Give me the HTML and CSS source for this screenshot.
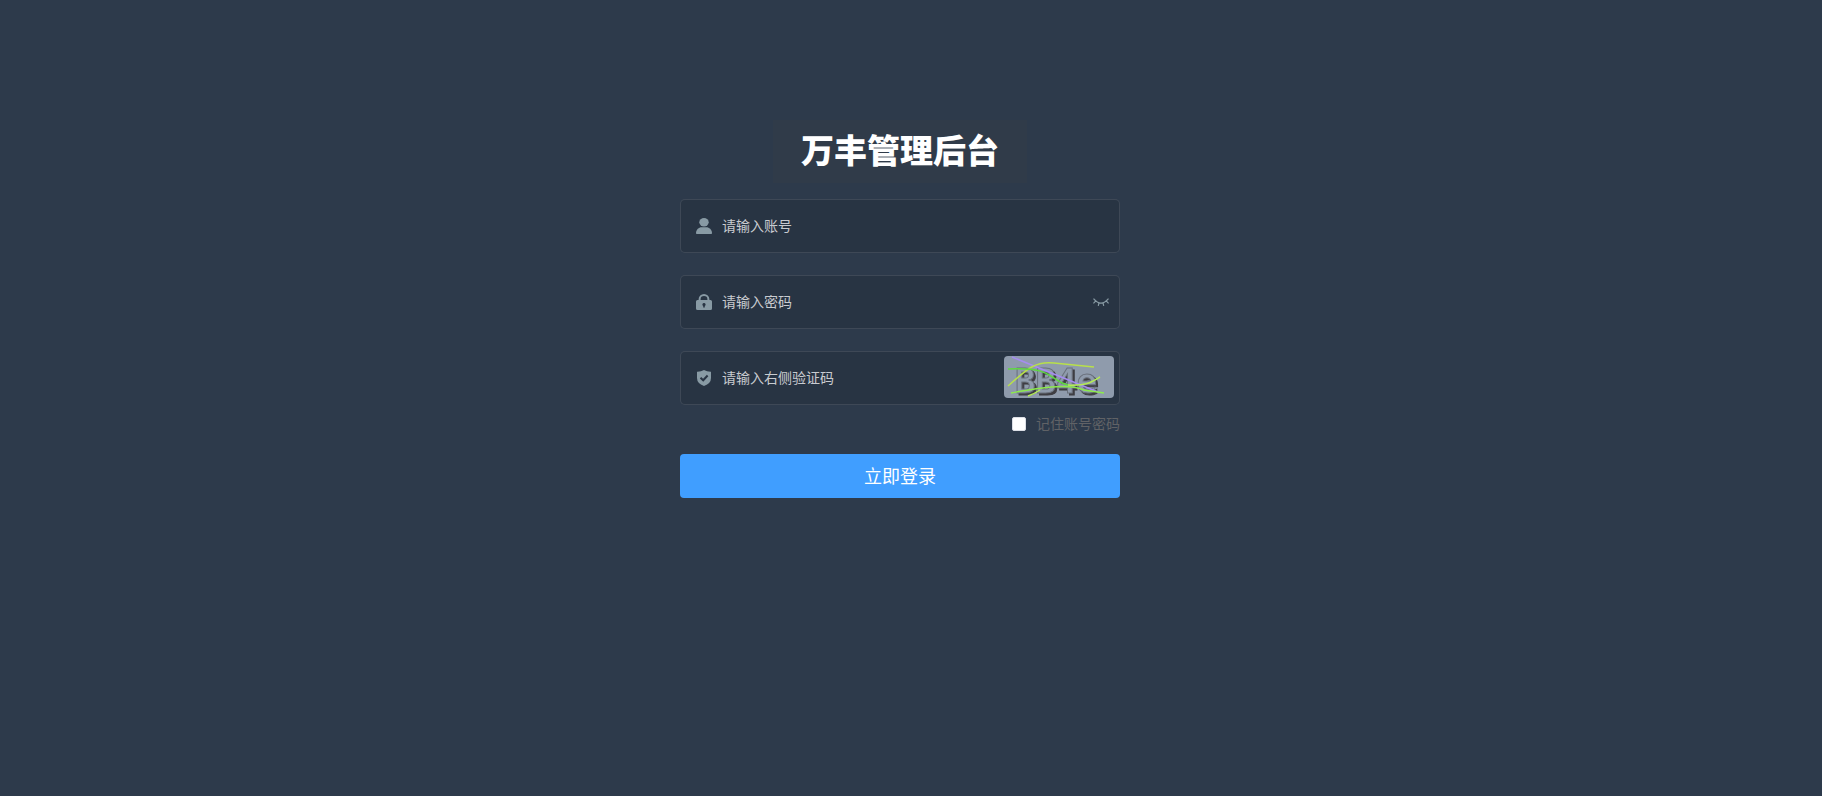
FILE: index.html
```html
<!DOCTYPE html>
<html lang="zh-CN">
<head>
    <meta charset="utf-8">
    <meta name="viewport" content="width=device-width, initial-scale=1">
    <title>万丰管理后台</title>
    <link rel="stylesheet" href="styles.css">
</head>
<body>
    <div class="login-container">
        <form class="login-form">
            <h3 class="title">万丰管理后台</h3>

            <div class="form-item">
                <label class="icon" for="username" aria-label="账号">
                    <svg viewBox="0 0 16 16" width="16" height="16" fill="currentColor">
                        <ellipse cx="8" cy="4.2" rx="4.7" ry="4.2"/>
                        <path d="M0 15.2C0 11.5 3 9.3 5.5 9.3h5C13 9.3 16 11.5 16 15.2q0 .8-.8.8H.8Q0 16 0 15.2z"/>
                    </svg>
                </label>
                <input type="text" id="username" placeholder="请输入账号">
            </div>

            <div class="form-item">
                <label class="icon" for="password" aria-label="密码">
                    <svg viewBox="0 0 16 16" width="16" height="16" fill="currentColor">
                        <path d="M3.6 6.5V5.2a4.4 4.2 0 0 1 8.800 0V6.500" fill="none" stroke="currentColor" stroke-width="2"/>
                        <path fill-rule="evenodd" d="M1.5 6h13Q16 6 16 7.5v7q0 1.5-1.5 1.5h-13Q0 16 0 14.5v-7Q0 6 1.5 6zM8 9a1.6 1.6 0 0 0-.8 3v1.6h1.6V12A1.6 1.6 0 0 0 8 9z"/>
                    </svg>
                </label>
                <input type="password" id="password" placeholder="请输入密码">
                <button type="button" class="show-pwd" aria-label="显示密码">
                    <svg viewBox="0 0 16 8" width="16" height="8" fill="none" stroke="currentColor" stroke-width="1.2">
                        <path d="M.5 .6Q8 9.600 15.500 .6M2.800 2.800.4 5.400M13.200 2.800l2.400 2.600M6 4.600 5.300 7.800M10 4.600l.7 3.200"/>
                    </svg>
                </button>
            </div>

            <div class="form-item">
                <label class="icon" for="code" aria-label="验证码">
                    <svg viewBox="0 0 16 16" width="16" height="16" fill="currentColor">
                        <path d="M8 0Q11 1.8 15 1.7V8q0 5.500-7 8Q1 13.500 1 8V1.700Q5 1.800 8 0z"/>
                        <path class="check" d="M4.5 7.8 7.2 10.3 11.6 5.5"/>
                    </svg>
                </label>
                <input type="text" id="code" placeholder="请输入右侧验证码">
                <button type="button" class="captcha" aria-label="换一张">
                    <svg viewBox="0 0 110 42" width="110" height="42">
                        <text class="letters" x="11" y="37">BB4e</text>
                        <g class="lines">
                            <path stroke="#a58cf0" d="M8 1Q62 23 94 36"/>
                            <path stroke="#b8e04a" d="M4 30C24 12 32 5 50 7L90 11"/>
                            <path stroke="#5fd840" d="M4 13C52 11 44 24 64 29"/>
                            <path stroke="#8cea4c" d="M7 37C34 32 64 27 80 34L100 37"/>
                            <path stroke="#b4ec54" d="M24 40Q30 38 36 34M64 29C82 30 86 27 96 21"/>
                        </g>
                    </svg>
                </button>
            </div>

            <div class="remember">
                <input type="checkbox" id="remember">
                <label for="remember">记住账号密码</label>
            </div>

            <button type="button" class="login-btn">立即登录</button>
        </form>
    </div>
</body>
</html>
```
FILE: styles.css
```css
* {
    box-sizing: border-box;
}
body {
    margin: 0;
    font-family: "Noto Sans CJK SC", sans-serif;
    font-size: 14px;
}
button {
    padding: 0;
    border: none;
    background: none;
    font-family: inherit;
    cursor: pointer;
}
svg {
    display: block;
}
.login-container {
    min-height: 100vh;
    padding: 120px 22px 0 0;
    background: #2d3a4b;
}
.login-form {
    display: flex;
    flex-direction: column;
    width: 100%;
    max-width: 440px;
    margin: 0 auto;
}
.title {
    align-self: center;
    margin: 0 0 16px;
    padding: 0 28px 4px;
    background: #303b49;
    color: #fff;
    font-size: 33px;
    line-height: 59px;
    font-weight: 900;
}
.form-item {
    display: flex;
    align-items: center;
    height: 54px;
    margin-bottom: 22px;
    padding: 0 5px 0 15px;
    border: 1px solid rgba(255, 255, 255, 0.1);
    border-radius: 5px;
    background: rgba(0, 0, 0, 0.1);
}
.icon {
    color: #889aa4;
}
.check {
    fill: none;
    stroke: #293443;
    stroke-width: 2;
}
.form-item input {
    flex: 1;
    min-width: 0;
    height: 52px;
    padding: 0 10px 2px;
    border: none;
    outline: none;
    background: transparent;
    color: #fff;
    font-family: inherit;
    font-size: 14px;
}
.form-item input::placeholder {
    color: #c8cbd0;
}
.show-pwd {
    margin-right: 5px;
    color: #889aa4;
}
.captcha {
    margin-bottom: 2px;
    border-radius: 4px;
    background: #8f9bac;
    overflow: hidden;
}
.letters {
    fill: #8f9bac;
    stroke: #6a717c;
    stroke-width: 1;
    font-family: "DejaVu Sans Mono", monospace;
    font-size: 34px;
    font-weight: bold;
    filter: drop-shadow(2px 2px 0 #3e3d42);
}
.lines {
    fill: none;
    stroke-width: 1.5;
}
.remember {
    display: flex;
    align-items: center;
    justify-content: flex-end;
    gap: 10px;
    height: 20px;
    margin-top: -13px;
    margin-bottom: 20px;
    color: #606266;
}
.remember label {
    padding-bottom: 2px;
}
.remember input {
    appearance: none;
    width: 14px;
    height: 14px;
    margin: 0;
    border: 1px solid #dcdfe6;
    border-radius: 2px;
    background: #fff;
}
.remember input:checked {
    background: #409eff;
}
.login-btn {
    height: 44px;
    padding-bottom: 2px;
    border-radius: 4px;
    background: #409eff;
    color: #fff;
    font-size: 18px;
}
```
